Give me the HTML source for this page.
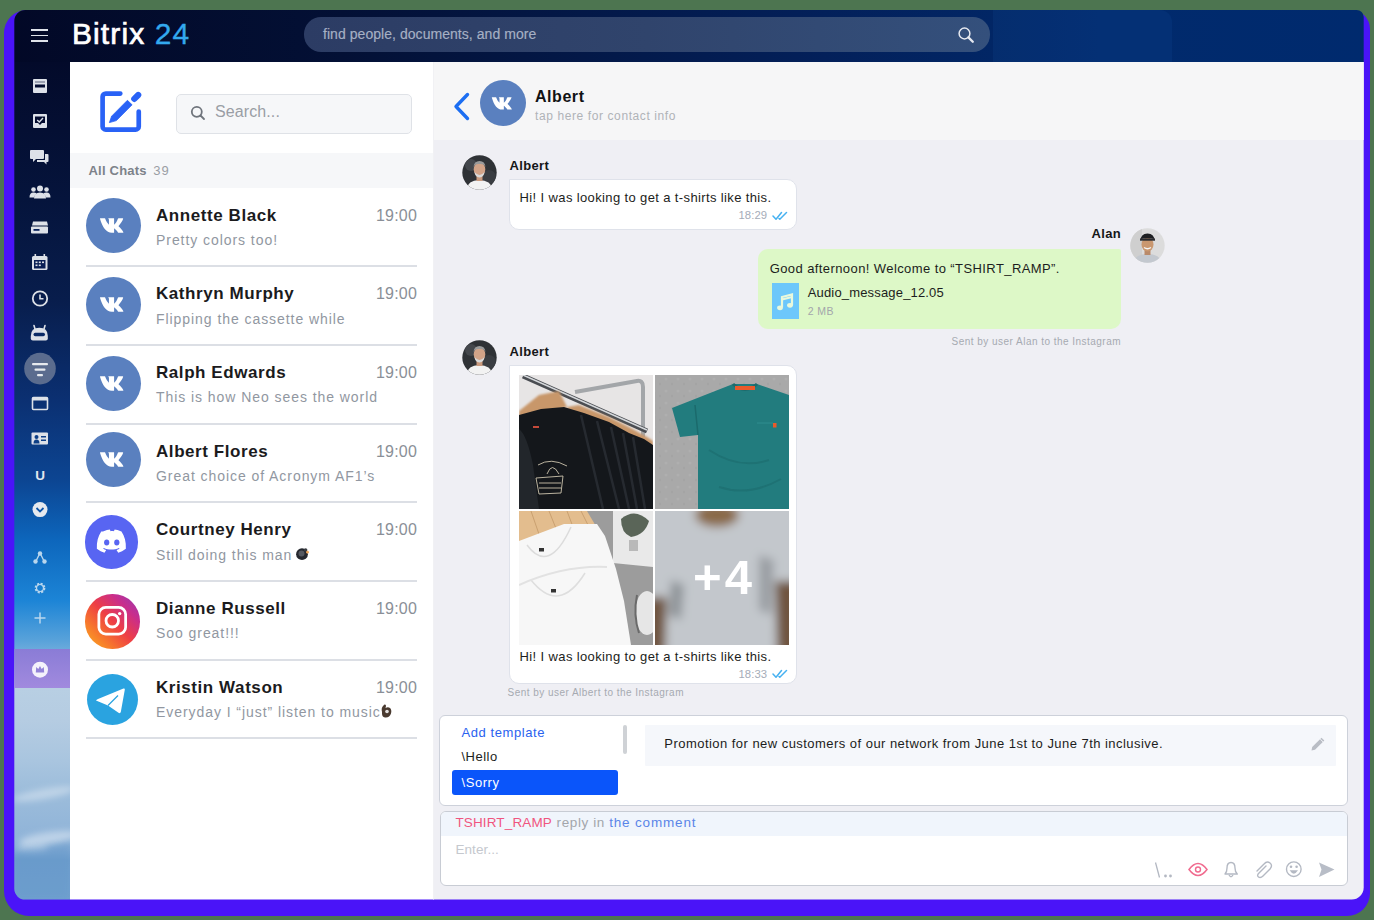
<!DOCTYPE html>
<html><head><meta charset="utf-8">
<style>
*{box-sizing:border-box;margin:0;padding:0}
html,body{width:1374px;height:920px;overflow:hidden}
body{background:#4d7550;position:relative;font-family:"Liberation Sans",sans-serif}
.a{position:absolute}
.t{position:absolute;white-space:nowrap;line-height:1}
#purple{left:3.5px;top:10px;width:1366.5px;height:906.3px;border-radius:23px 19px 23px 25px;background:#4a14f8}
#app{left:0;top:0;width:1374px;height:920px;clip-path:inset(10px 10.3px 20.4px 14.3px round 11px 7px 12px 11px)}
#hdr{left:0;top:0;width:1374px;height:62px;background:linear-gradient(90deg,#020826 0%,#031035 25%,#03205a 60%,#012a6c 80%,#002a6e 100%)}
#side{left:0;top:62px;width:70px;height:858px;background:linear-gradient(180deg,#030a2a 0%,#05143c 16%,#081d4c 27.7%,#0b3072 39.4%,#0c4592 48.7%,#0d66bc 55.7%,#1c84d6 62.7%,#58a2da 67.4%,#b8cfe3 73%,#b5cce2 76.7%,#a9c5df 81.4%,#9dbddb 84.8%,#8fb3d8 90.7%,#6f9fcd 93%,#73a3d0 97.7%)}
#list{left:70px;top:62px;width:364px;height:858px;background:#fff}
#chat{left:434px;top:62px;width:940px;height:858px;background:#efeff4}
#chdr{left:434px;top:62px;width:940px;height:78px;background:#f6f6f7}
.nm{position:absolute;white-space:nowrap;line-height:1;font-size:17px;font-weight:700;color:#1b1b1d;letter-spacing:0.57px;left:156px}
.ms{position:absolute;white-space:nowrap;line-height:1;font-size:14px;color:#9197a1;letter-spacing:0.94px;left:156px}
.tm{position:absolute;white-space:nowrap;line-height:1;font-size:16px;color:#8a8f97;letter-spacing:0.2px;right:957px}
.sep{position:absolute;left:86px;width:331px;height:2px;background:#dcdfe5}
.av{position:absolute;left:85.5px;width:55px;height:55px;border-radius:50%}
</style></head><body>
<div id="purple" class="a"></div>
<div id="app" class="a">
  <div id="hdr" class="a"></div>
  <div class="a" style="left:993px;top:10px;width:179px;height:52px;border-radius:0 12px 0 0;background:rgba(40,110,200,0.10)"></div>
  <div class="a" style="left:31px;top:29px;width:17px;height:1.6px;background:#dfe3ea"></div>
  <div class="a" style="left:31px;top:34.5px;width:17px;height:1.6px;background:#dfe3ea"></div>
  <div class="a" style="left:31px;top:40px;width:17px;height:1.6px;background:#dfe3ea"></div>
  <div class="t" style="left:72px;top:19px;font-size:30px;color:#fff;letter-spacing:1.1px;-webkit-text-stroke:0.7px #fff">Bitrix <span style="color:#33a9ee;-webkit-text-stroke:0.3px #33a9ee">24</span></div>
  <div class="a" style="left:304px;top:17.2px;width:686px;height:34.5px;border-radius:17.2px;background:linear-gradient(90deg,#2c3c64 0%,#30446c 50%,#34507c 100%)"></div>
  <div class="t" style="left:323px;top:27px;font-size:14px;color:#a6b0c4;letter-spacing:0.05px;-webkit-text-stroke:0.15px #a6b0c4">find people, documents, and more</div>
  <svg class="a" style="left:957px;top:26px" width="18" height="18" viewBox="0 0 18 18"><circle cx="7.5" cy="7.5" r="5.4" fill="none" stroke="#e6e9f0" stroke-width="1.5"/><path d="M11.4 11.4 L15.8 15.8" stroke="#e6e9f0" stroke-width="2.3" stroke-linecap="round"/></svg>
  <div id="side" class="a"></div>
  <svg class="a" style="left:14px;top:760px" width="56" height="140" viewBox="0 0 56 140"><defs><filter id="cb" x="-50%" y="-50%" width="200%" height="200%"><feGaussianBlur stdDeviation="3"/></filter></defs><g filter="url(#cb)" fill="#fff"><ellipse cx="30" cy="34" rx="32" ry="5" opacity=".35" transform="rotate(-10 30 34)"/><ellipse cx="35" cy="78" rx="30" ry="6" opacity=".4" transform="rotate(-8 35 78)"/><ellipse cx="18" cy="88" rx="16" ry="4" opacity=".3"/></g><path d="M0 94 Q20 86 35 88 Q48 82 56 84 V140 H0z" fill="#5f93c8" opacity=".3" filter="url(#cb)"/></svg>
  <div class="a" style="left:14px;top:649px;width:56px;height:39px;background:linear-gradient(180deg,#8a7cd6,#a18ade)"></div>
  <svg class="a" style="left:0;top:62px" width="70" height="640" viewBox="0 62 70 640">
    <g fill="#dde1e8">
      <rect x="33" y="79" width="14" height="14" rx="1"/>
      <rect x="33" y="114" width="14" height="14" rx="1"/>
    </g>
    <rect x="35" y="84.5" width="10" height="3" fill="#030b2e"/>
    <rect x="35" y="81.5" width="10" height="1" fill="#030b2e" opacity=".6"/>
    <path d="M35 116.5 H45 V123 H42 L40 125 L38 123 H35 Z" fill="#030b2e"/>
    <path d="M37.2 120 L39.3 122 L43 118" stroke="#dde1e8" stroke-width="1.4" fill="none"/>
    <g fill="#dde1e8">
      <path d="M31 150 h12 a1 1 0 0 1 1 1 v7 a1 1 0 0 1 -1 1 h-7 l-3 3 v-3 h-2 a1 1 0 0 1 -1 -1 v-7 a1 1 0 0 1 1 -1z"/>
      <path d="M45 154 h2.5 a1 1 0 0 1 1 1 v6 a1 1 0 0 1 -1 1 h-1 v2.5 l-2.5 -2.5 h-7 v-2 h8 z"/>
      <circle cx="40" cy="188.5" r="3"/><path d="M34 198.5 q0 -6 6 -6 q6 0 6 6z"/>
      <circle cx="33.5" cy="189.5" r="2.3"/><path d="M29.5 197.5 q0 -5 4 -5 q2 0 3 1 q-2 2 -2 4z"/>
      <circle cx="46.5" cy="189.5" r="2.3"/><path d="M50.5 197.5 q0 -5 -4 -5 q-2 0 -3 1 q2 2 2 4z"/>
      <path d="M33 221.5 h14 l1 4 h-16z"/>
      <rect x="31" y="226.5" width="17" height="7" rx="1"/>
      <rect x="32" y="256" width="15.5" height="14" rx="1.5"/>
      <rect x="34.5" y="254" width="1.6" height="4"/><rect x="43.5" y="254" width="1.6" height="4"/>
    </g>
    <rect x="33.5" y="229" width="6" height="1.8" fill="#07205a"/>
    <g fill="#0a1f55"><rect x="34" y="260" width="11.5" height="8.5"/></g>
    <g fill="#dde1e8"><rect x="35.5" y="261.5" width="2" height="1.6"/><rect x="38.8" y="261.5" width="2" height="1.6"/><rect x="42" y="261.5" width="2" height="1.6"/><rect x="35.5" y="264.5" width="2" height="1.6"/><rect x="38.8" y="264.5" width="2" height="1.6"/></g>
    <circle cx="40" cy="298.5" r="7.2" fill="none" stroke="#dde1e8" stroke-width="1.8"/>
    <path d="M40 294.5 V298.8 H43.5" stroke="#dde1e8" stroke-width="1.6" fill="none"/>
    <path d="M30.8 336 Q30.8 327.8 39.3 327.8 Q47.8 327.8 47.8 336 V338.4 a2 2 0 0 1 -2 2 H32.8 a2 2 0 0 1 -2 -2z" fill="#dde1e8"/><path d="M34 325.5 L35 329 M45 325.5 L44 329" stroke="#dde1e8" stroke-width="1.6" stroke-linecap="round"/><rect x="33.5" y="332.8" width="11.5" height="3.4" rx="1.7" fill="#0b2a66"/>
    <circle cx="40" cy="368.6" r="15.8" fill="#5b6c8e"/>
    <g fill="#e6e9ee"><rect x="32" y="363" width="16" height="2.2" rx="1"/><rect x="34.5" y="368.5" width="11" height="2.2" rx="1"/><rect x="37" y="374" width="6" height="2.2" rx="1"/></g>
    <rect x="32.5" y="397.5" width="15" height="12" rx="1" fill="none" stroke="#dde1e8" stroke-width="1.6"/>
    <rect x="32.5" y="397.5" width="15" height="3" fill="#dde1e8"/>
    <rect x="31.5" y="432.5" width="16.5" height="12" rx="1" fill="#dde1e8"/>
    <g fill="#0d3e86"><circle cx="36.5" cy="437" r="2"/><path d="M33.5 443.5 q0 -4 3 -4 q3 0 3 4z"/><rect x="41" y="436" width="5" height="1.5"/><rect x="41" y="439.5" width="5" height="1.5"/></g>
    <text x="40" y="479.5" text-anchor="middle" font-family="Liberation Sans" font-weight="700" font-size="13.5" fill="#e3e7ee">U</text>
    <circle cx="40" cy="509.6" r="7.5" fill="#e6e9ee"/>
    <path d="M36.5 508 L40 511.5 L43.5 508" stroke="#0f55a8" stroke-width="1.8" fill="none"/>
    <g stroke="#b9d6ee" stroke-width="1.4" fill="none"><path d="M40 553 L36 561 M40 553 L44 561"/></g>
    <g fill="#b9d6ee"><circle cx="40" cy="553.5" r="2.2"/><circle cx="35.5" cy="561.5" r="2.2"/><circle cx="44.5" cy="561.5" r="2.2"/></g>
    <circle cx="40" cy="588" r="4.2" fill="none" stroke="#b9d6ee" stroke-width="2.4" stroke-dasharray="2 1.3"/>
    <circle cx="40" cy="588" r="3.5" fill="none" stroke="#b9d6ee" stroke-width="1.2"/>
    <path d="M40 612.5 V623.5 M34.5 618 H45.5" stroke="#b9d6ee" stroke-width="1.5"/>
    <circle cx="40" cy="669.7" r="8" fill="#f4f2fb"/>
    <path d="M35.8 672.5 L36.2 667 L38.3 669 L40 666 L41.7 669 L43.8 667 L44.2 672.5z" fill="#9383d8"/>
  </svg>
  <div id="list" class="a"></div>
<svg class="a" style="left:99px;top:90px" width="44" height="44" viewBox="0 0 44 44"><path d="M21.3 3.55 H6.8 a3.2 3.2 0 0 0 -3.2 3.2 V36.45 a3.2 3.2 0 0 0 3.2 3.2 H36.55 a3.2 3.2 0 0 0 3.2 -3.2 V21.6" fill="none" stroke="#2962f6" stroke-width="4.7" stroke-linecap="round" stroke-linejoin="round"/><path d="M10.4 32.6 L12.6 26.2 L28.4 10.3 L33.1 14.8 L17.4 30.6 Z" fill="#2962f6" stroke="#2962f6" stroke-width="0.8" stroke-linejoin="round"/><path d="M35.3 8.9 L39.2 5" stroke="#2962f6" stroke-width="6.2" stroke-linecap="round"/></svg>
  <div class="a" style="left:176px;top:93.5px;width:236px;height:40.5px;border:1.3px solid #dfe2e7;border-radius:5px;background:#f6f7f9"></div>
  <svg class="a" style="left:190px;top:105px" width="16" height="16" viewBox="0 0 16 16"><circle cx="6.8" cy="6.8" r="5" fill="none" stroke="#6f747c" stroke-width="1.8"/><path d="M10.5 10.5 L14 14" stroke="#6f747c" stroke-width="1.8" stroke-linecap="round"/></svg>
  <div class="t" style="left:215px;top:104px;font-size:16px;color:#9a9ea5;letter-spacing:0.1px">Search...</div>
  <div class="a" style="left:70px;top:153px;width:364px;height:34.5px;background:#f6f7f9"></div>
  <div class="t" style="left:88.5px;top:163.5px;font-size:13px;font-weight:700;color:#7d828a;letter-spacing:0.22px">All Chats <span style="font-weight:400;color:#9a9ea4;margin-left:2.5px;letter-spacing:1px">39</span></div>
  <div class="av" style="left:85.5px;top:198.0px;width:55px;height:55px;background:#5a80bf"><svg width="100%" height="100%" viewBox="0 0 55 55"><path transform="translate(2.2 2.35) scale(0.83)" d="M14.5 21.5 h5.2 c0.3 0 0.6 0.2 0.7 0.5 c1.2 3.4 3 6.2 4.6 7.3 v-5.6 c0-0.8-0.4-1.5-1-2 c-0.2-0.1 0-0.2 0.1-0.2 h6.6 c0.3 0 0.5 0.2 0.5 0.5 v7.3 c1.6-0.9 3.4-3.6 4.6-7.1 c0.1-0.4 0.4-0.7 0.8-0.7 h5 c0.4 0 0.6 0.3 0.5 0.6 c-0.9 3.1-3.5 6.5-5.3 8.4 c-0.3 0.3-0.3 0.7 0 1 c2.1 2 4.6 4.7 5.6 7 c0.1 0.3-0.1 0.6-0.4 0.6 h-5.2 c-0.4 0-0.7-0.2-0.9-0.5 c-1.1-1.8-2.8-3.7-4.7-5 v5 c0 0.3-0.2 0.5-0.5 0.5 h-2.3 c-6.4 0-11.3-6.6-14.2-16.9 c-0.1-0.3 0.1-0.6 0.4-0.6z" fill="#fff"/></svg></div>
  <div class="nm" style="top:206.5px">Annette Black</div>
  <div class="tm" style="top:207.5px">19:00</div>
  <div class="ms" style="top:233.0px">Pretty colors too!</div>
  <div class="sep" style="top:265.4px"></div>
  <div class="av" style="left:85.5px;top:277.2px;width:55px;height:55px;background:#5a80bf"><svg width="100%" height="100%" viewBox="0 0 55 55"><path transform="translate(2.2 2.35) scale(0.83)" d="M14.5 21.5 h5.2 c0.3 0 0.6 0.2 0.7 0.5 c1.2 3.4 3 6.2 4.6 7.3 v-5.6 c0-0.8-0.4-1.5-1-2 c-0.2-0.1 0-0.2 0.1-0.2 h6.6 c0.3 0 0.5 0.2 0.5 0.5 v7.3 c1.6-0.9 3.4-3.6 4.6-7.1 c0.1-0.4 0.4-0.7 0.8-0.7 h5 c0.4 0 0.6 0.3 0.5 0.6 c-0.9 3.1-3.5 6.5-5.3 8.4 c-0.3 0.3-0.3 0.7 0 1 c2.1 2 4.6 4.7 5.6 7 c0.1 0.3-0.1 0.6-0.4 0.6 h-5.2 c-0.4 0-0.7-0.2-0.9-0.5 c-1.1-1.8-2.8-3.7-4.7-5 v5 c0 0.3-0.2 0.5-0.5 0.5 h-2.3 c-6.4 0-11.3-6.6-14.2-16.9 c-0.1-0.3 0.1-0.6 0.4-0.6z" fill="#fff"/></svg></div>
  <div class="nm" style="top:285.2px">Kathryn Murphy</div>
  <div class="tm" style="top:286.2px">19:00</div>
  <div class="ms" style="top:311.7px">Flipping the cassette while</div>
  <div class="sep" style="top:344.1px"></div>
  <div class="av" style="left:85.5px;top:355.5px;width:55px;height:55px;background:#5a80bf"><svg width="100%" height="100%" viewBox="0 0 55 55"><path transform="translate(2.2 2.35) scale(0.83)" d="M14.5 21.5 h5.2 c0.3 0 0.6 0.2 0.7 0.5 c1.2 3.4 3 6.2 4.6 7.3 v-5.6 c0-0.8-0.4-1.5-1-2 c-0.2-0.1 0-0.2 0.1-0.2 h6.6 c0.3 0 0.5 0.2 0.5 0.5 v7.3 c1.6-0.9 3.4-3.6 4.6-7.1 c0.1-0.4 0.4-0.7 0.8-0.7 h5 c0.4 0 0.6 0.3 0.5 0.6 c-0.9 3.1-3.5 6.5-5.3 8.4 c-0.3 0.3-0.3 0.7 0 1 c2.1 2 4.6 4.7 5.6 7 c0.1 0.3-0.1 0.6-0.4 0.6 h-5.2 c-0.4 0-0.7-0.2-0.9-0.5 c-1.1-1.8-2.8-3.7-4.7-5 v5 c0 0.3-0.2 0.5-0.5 0.5 h-2.3 c-6.4 0-11.3-6.6-14.2-16.9 c-0.1-0.3 0.1-0.6 0.4-0.6z" fill="#fff"/></svg></div>
  <div class="nm" style="top:363.8px">Ralph Edwards</div>
  <div class="tm" style="top:364.8px">19:00</div>
  <div class="ms" style="top:390.3px">This is how Neo sees the world</div>
  <div class="sep" style="top:422.7px"></div>
  <div class="av" style="left:85.5px;top:431.5px;width:55px;height:55px;background:#5a80bf"><svg width="100%" height="100%" viewBox="0 0 55 55"><path transform="translate(2.2 2.35) scale(0.83)" d="M14.5 21.5 h5.2 c0.3 0 0.6 0.2 0.7 0.5 c1.2 3.4 3 6.2 4.6 7.3 v-5.6 c0-0.8-0.4-1.5-1-2 c-0.2-0.1 0-0.2 0.1-0.2 h6.6 c0.3 0 0.5 0.2 0.5 0.5 v7.3 c1.6-0.9 3.4-3.6 4.6-7.1 c0.1-0.4 0.4-0.7 0.8-0.7 h5 c0.4 0 0.6 0.3 0.5 0.6 c-0.9 3.1-3.5 6.5-5.3 8.4 c-0.3 0.3-0.3 0.7 0 1 c2.1 2 4.6 4.7 5.6 7 c0.1 0.3-0.1 0.6-0.4 0.6 h-5.2 c-0.4 0-0.7-0.2-0.9-0.5 c-1.1-1.8-2.8-3.7-4.7-5 v5 c0 0.3-0.2 0.5-0.5 0.5 h-2.3 c-6.4 0-11.3-6.6-14.2-16.9 c-0.1-0.3 0.1-0.6 0.4-0.6z" fill="#fff"/></svg></div>
  <div class="nm" style="top:442.5px">Albert Flores</div>
  <div class="tm" style="top:443.5px">19:00</div>
  <div class="ms" style="top:469.0px">Great choice of Acronym AF1’s</div>
  <div class="sep" style="top:501.4px"></div>
  <div class="av" style="left:84.8px;top:515.4px;width:53.5px;height:53.5px;background:#5865f2"><svg width="100%" height="100%" viewBox="0 0 55 55"><path d="M18.5 17 c2.8-1.3 5.6-2 7-2.1 l0.8 1.7 c1-0.1 2.4-0.1 3.4 0 l0.8-1.7 c1.4 0.1 4.2 0.8 7 2.1 c3.2 4.8 4.9 10.5 4.5 17.8 c-2.5 2-5.3 3.3-7.8 4 l-1.8-2.8 c1.2-0.4 2.2-0.9 3.2-1.6 l-0.8-0.6 c-4.4 2.1-11 2.1-15.4 0 l-0.8 0.6 c1 0.7 2 1.2 3.2 1.6 l-1.8 2.8 c-2.5-0.7-5.3-2-7.8-4 c-0.4-7.3 1.3-13 4.5-17.8z" fill="#fff"/><ellipse cx="22.3" cy="28.3" rx="2.7" ry="3" fill="#5865f2"/><ellipse cx="32.7" cy="28.3" rx="2.7" ry="3" fill="#5865f2"/></svg></div>
  <div class="nm" style="top:521.2px">Courtney Henry</div>
  <div class="tm" style="top:522.2px">19:00</div>
  <div class="ms" style="top:547.7px">Still doing this man</div>
  <div class="sep" style="top:580.1px"></div>
  <div class="av" style="left:85.0px;top:594.0px;width:54.5px;height:54.5px;background:linear-gradient(45deg,#fbb11f 0%,#f77a2c 25%,#ee3f44 50%,#c92d8c 75%,#8d3bb8 100%)"><svg width="100%" height="100%" viewBox="0 0 55 55"><rect x="14" y="13.5" width="27" height="27" rx="7" fill="none" stroke="#fff" stroke-width="2.8"/><circle cx="27.5" cy="27" r="6.3" fill="none" stroke="#fff" stroke-width="2.8"/><circle cx="35" cy="19.8" r="1.7" fill="#fff"/></svg></div>
  <div class="nm" style="top:599.9px">Dianne Russell</div>
  <div class="tm" style="top:600.9px">19:00</div>
  <div class="ms" style="top:626.4px">Soo great!!!</div>
  <div class="sep" style="top:658.8px"></div>
  <div class="av" style="left:86.5px;top:673.5px;width:51.5px;height:51.5px;background:#2aa3e0"><svg width="100%" height="100%" viewBox="0 0 51.5 51.5"><path d="M9 26.5 Q9.5 25.5 11 25 L36.5 14.5 Q38 14 37.8 15.8 L33.8 38 Q33.3 39.8 31.5 38.8 L21 31.5 Z" fill="#fff"/><path d="M21 31.5 L31 21.5" stroke="#2aa3e0" stroke-width="1.2"/></svg></div>
  <div class="nm" style="top:678.5px">Kristin Watson</div>
  <div class="tm" style="top:679.5px">19:00</div>
  <div class="ms" style="top:705.0px">Everyday I “just” listen to music</div>
  <div class="sep" style="top:737.4px"></div>
  <svg class="a" style="left:295px;top:545px" width="16" height="16" viewBox="0 0 16 16"><circle cx="7" cy="9.2" r="5.9" fill="#25282e"/><circle cx="6.5" cy="8.5" r="3" fill="#6a6e76" opacity=".7"/><circle cx="10.6" cy="5" r="1.8" fill="#3a3d42"/><circle cx="12.5" cy="7.2" r="1.4" fill="#f3a95a"/></svg>
  <svg class="a" style="left:379px;top:703px" width="14" height="16" viewBox="0 0 14 16"><path d="M3 9 Q2 5 4 3 L5.5 1.5 Q7 1 7 3 L6.5 5 Q9 3.5 11 5 Q13 7 12 10.5 Q10.5 15 6 14.5 Q2.5 14 3 9z" fill="#4a3a30"/><circle cx="8" cy="8.5" r="1.8" fill="#fff" opacity=".85"/></svg>
  <div id="chat" class="a"></div>
  <div id="chdr" class="a"></div>
  <div class="a" style="left:433px;top:62px;width:1px;height:858px;background:#f1f1f4"></div>
  <svg class="a" style="left:450px;top:90px" width="24" height="34" viewBox="0 0 24 34"><path d="M17.5 4.5 L6 16.5 L17.5 28.5" fill="none" stroke="#1c6ef2" stroke-width="3.4" stroke-linecap="round" stroke-linejoin="round"/></svg>
  <div class="av" style="left:479.7px;top:79.5px;width:46.7px;height:46.7px;background:#5a80bf"><svg width="100%" height="100%" viewBox="0 0 55 55"><path transform="translate(2.2 2.35) scale(0.83)" d="M14.5 21.5 h5.2 c0.3 0 0.6 0.2 0.7 0.5 c1.2 3.4 3 6.2 4.6 7.3 v-5.6 c0-0.8-0.4-1.5-1-2 c-0.2-0.1 0-0.2 0.1-0.2 h6.6 c0.3 0 0.5 0.2 0.5 0.5 v7.3 c1.6-0.9 3.4-3.6 4.6-7.1 c0.1-0.4 0.4-0.7 0.8-0.7 h5 c0.4 0 0.6 0.3 0.5 0.6 c-0.9 3.1-3.5 6.5-5.3 8.4 c-0.3 0.3-0.3 0.7 0 1 c2.1 2 4.6 4.7 5.6 7 c0.1 0.3-0.1 0.6-0.4 0.6 h-5.2 c-0.4 0-0.7-0.2-0.9-0.5 c-1.1-1.8-2.8-3.7-4.7-5 v5 c0 0.3-0.2 0.5-0.5 0.5 h-2.3 c-6.4 0-11.3-6.6-14.2-16.9 c-0.1-0.3 0.1-0.6 0.4-0.6z" fill="#fff"/></svg></div>
  <div class="t" style="left:535.0px;top:88.76px;font-size:16px;font-weight:700;color:#111214;letter-spacing:0.55px;">Albert</div>
  <div class="t" style="left:535.0px;top:110.34px;font-size:12px;font-weight:400;color:#b0b3b8;letter-spacing:0.6px;">tap here for contact info</div>
  <svg class="a" style="left:461.5px;top:154.8px" width="35" height="35" viewBox="0 0 35 35"><defs><clipPath id="ca172"><circle cx="17.5" cy="17.5" r="17.2"/></clipPath></defs><g clip-path="url(#ca172)"><rect width="35" height="35" fill="#2f3236"/><circle cx="9" cy="10" r="6" fill="#44474c"/><circle cx="27" cy="22" r="7" fill="#3a3d42"/><path d="M4 35 Q6 25 17 25 Q29 25 31 35z" fill="#f2f2f2"/><rect x="14.5" y="20" width="6" height="6" fill="#c99a7e"/><ellipse cx="17.5" cy="14.5" rx="5.8" ry="7" fill="#d2a388"/><path d="M11.5 12 Q12 6 17.5 6 Q23 6 23.5 12 Q22 8.5 17.5 9 Q13 8.5 11.5 12z" fill="#9a9a9a"/><path d="M12.5 17 Q13 22 17.5 22.5 Q22 22 22.5 17 Q20 20 17.5 20 Q15 20 12.5 17z" fill="#d9d9d9"/></g></svg>
  <div class="t" style="left:509.6px;top:158.80px;font-size:13px;font-weight:700;color:#151618;letter-spacing:0.33px;">Albert</div>
  <div class="a" style="left:508.8px;top:178.5px;width:288.7px;height:51px;background:#fff;border:1px solid #dfe2ea;border-radius:0 10px 10px 10px"></div>
  <div class="t" style="left:519.6px;top:191.00px;font-size:13px;font-weight:400;color:#1c1d20;letter-spacing:0.37px;">Hi! I was looking to get a t-shirts like this.</div>
  <div class="t" style="left:738.4px;top:209.63px;font-size:11.3px;font-weight:400;color:#a5acb8;letter-spacing:0.1px;">18:29</div>
  <svg class="a" style="left:772px;top:210.5px" width="16" height="10" viewBox="0 0 16 10"><path d="M1 5 L4 8.2 L9.5 1.5 M7 7.5 L7.8 8.2 L14.5 1.5" fill="none" stroke="#46b1f1" stroke-width="1.5" stroke-linecap="round" stroke-linejoin="round"/></svg>
  <div class="t" style="right:253.0px;top:227.00px;font-size:13px;font-weight:700;color:#151618;letter-spacing:0.33px;">Alan</div>
  <svg class="a" style="left:1130px;top:228px" width="35" height="35" viewBox="0 0 35 35"><defs><clipPath id="cal"><circle cx="17.5" cy="17.5" r="17.2"/></clipPath></defs><g clip-path="url(#cal)"><rect width="35" height="35" fill="#dcdcdc"/><rect width="12" height="35" fill="#cfcfcf"/><path d="M3 35 Q5 26 17.5 26 Q30 26 32 35z" fill="#c3c8cf"/><rect x="14.5" y="21" width="6" height="6" fill="#b98a6a"/><ellipse cx="17.5" cy="16.5" rx="6" ry="7" fill="#c9976f"/><path d="M10.5 13 Q10.5 5.5 17.5 5.5 Q24.5 5.5 24.5 13 L24.5 11 Q17.5 9.5 10.5 11z" fill="#1e1f22"/><rect x="10" y="10.5" width="15" height="2.2" fill="#2a2b2e"/><path d="M14 19.5 Q17.5 22 21 19.5" stroke="#f4f4f4" stroke-width="1.3" fill="none"/></g></svg>
  <div class="a" style="left:757.6px;top:249px;width:363.5px;height:79.6px;background:#ddf8c7;border-radius:10px 2px 10px 10px"></div>
  <div class="t" style="left:769.7px;top:261.60px;font-size:13px;font-weight:400;color:#1c1d20;letter-spacing:0.41px;">Good afternoon! Welcome to “TSHIRT_RAMP”.</div>
  <svg class="a" style="left:771.5px;top:283px" width="27.5" height="36" viewBox="0 0 27.5 36"><rect width="27.5" height="36" fill="#6dc7fb"/><path d="M10 24.5 V14 L20 11.5 V22" fill="none" stroke="#e9f8dc" stroke-width="2.2"/><ellipse cx="8" cy="24.8" rx="2.9" ry="2.4" fill="#e9f8dc"/><ellipse cx="18" cy="22.3" rx="2.9" ry="2.4" fill="#e9f8dc"/><path d="M10 16.5 L20 14" stroke="#e9f8dc" stroke-width="2.2"/></svg>
  <div class="t" style="left:807.7px;top:286.00px;font-size:13px;font-weight:400;color:#1c1d20;letter-spacing:0.17px;">Audio_message_12.05</div>
  <div class="t" style="left:807.7px;top:305.91px;font-size:10.5px;font-weight:400;color:#a3a6ab;letter-spacing:0.4px;">2 MB</div>
  <div class="t" style="right:253.0px;top:336.74px;font-size:10px;font-weight:400;color:#a6aab1;letter-spacing:0.47px;">Sent by user Alan to the Instagram</div>
  <svg class="a" style="left:461.5px;top:340.2px" width="35" height="35" viewBox="0 0 35 35"><defs><clipPath id="ca357"><circle cx="17.5" cy="17.5" r="17.2"/></clipPath></defs><g clip-path="url(#ca357)"><rect width="35" height="35" fill="#2f3236"/><circle cx="9" cy="10" r="6" fill="#44474c"/><circle cx="27" cy="22" r="7" fill="#3a3d42"/><path d="M4 35 Q6 25 17 25 Q29 25 31 35z" fill="#f2f2f2"/><rect x="14.5" y="20" width="6" height="6" fill="#c99a7e"/><ellipse cx="17.5" cy="14.5" rx="5.8" ry="7" fill="#d2a388"/><path d="M11.5 12 Q12 6 17.5 6 Q23 6 23.5 12 Q22 8.5 17.5 9 Q13 8.5 11.5 12z" fill="#9a9a9a"/><path d="M12.5 17 Q13 22 17.5 22.5 Q22 22 22.5 17 Q20 20 17.5 20 Q15 20 12.5 17z" fill="#d9d9d9"/></g></svg>
  <div class="t" style="left:509.6px;top:345.00px;font-size:13px;font-weight:700;color:#151618;letter-spacing:0.33px;">Albert</div>
  <div class="a" style="left:508.8px;top:365.2px;width:288.2px;height:318.5px;background:#fff;border:1px solid #dfe2ea;border-radius:0 10px 10px 10px"></div>
  <svg class="a" style="left:519px;top:374.5px" width="270" height="270" viewBox="0 0 270 270">
    <defs>
      <clipPath id="t1"><rect x="0" y="0" width="134" height="134"/></clipPath>
      <clipPath id="t2"><rect x="136" y="0" width="134" height="134"/></clipPath>
      <clipPath id="t3"><rect x="0" y="136" width="134" height="134"/></clipPath>
      <clipPath id="t4"><rect x="136" y="136" width="134" height="134"/></clipPath>
      <filter id="bl" x="-20%" y="-20%" width="140%" height="140%"><feGaussianBlur stdDeviation="5"/></filter>
      <filter id="bl2"><feGaussianBlur stdDeviation="0.8"/></filter>
      <pattern id="cn" width="12" height="12" patternUnits="userSpaceOnUse"><rect width="12" height="12" fill="#a9a9a9"/><circle cx="3" cy="4" r="1.5" fill="#bdbdbd"/><circle cx="9" cy="9" r="1.2" fill="#979797"/></pattern>
    </defs>
    <g clip-path="url(#t1)">
      <rect width="134" height="134" fill="#e7e5e5"/>
      <path d="M56 17 L118 6 Q124 5 124 12 L124 62" fill="none" stroke="#a3a6a9" stroke-width="4"/>
      <path d="M4 1 L128 56" stroke="#4a4d52" stroke-width="5"/>
      <path d="M4 0 L128 55" stroke="#d5d8db" stroke-width="1.5"/>
      <g filter="url(#bl2)">
      <path d="M0 36 L20 20 L40 16 L48 32 L20 40 L0 48z" fill="#c8976a"/>
      <path d="M48 32 L60 30 L90 42 L110 52 L128 62 L134 66 L134 72 L110 64 L80 52 L50 40z" fill="#c8976a"/>
      </g>
      <path d="M0 40 L22 34 L45 32 L65 38 L90 47 L110 58 L125 64 L134 70 V134 H0z" fill="#14171b"/>
      <path d="M62 40 L84 134 M78 46 L100 134 M92 52 L110 134 M104 58 L118 134 M114 62 L126 134" stroke="#262a30" stroke-width="2.5"/>
      <path d="M0 54 Q8 60 14 90 L20 134 H0z" fill="#22262b"/>
      <rect x="14" y="51" width="6" height="2" fill="#c54a3a"/>
      <g fill="none" stroke="#cdc4ae" stroke-width="0.9"><path d="M19 90 Q32 82 48 91"/><path d="M17 103 L44 101 L42 118 L20 119z"/><path d="M28 99 Q33 86 40 99"/><path d="M20 108 H42 M20 113 H42"/></g>
    </g>
    <g clip-path="url(#t1)"></g>
    <g clip-path="url(#t2)">
      <rect x="136" width="134" height="134" fill="#a9a9a9"/>
      <rect x="136" width="134" height="134" fill="url(#cn)" opacity=".3"/>
      <path d="M153 33 L186 20 L214 9 L238 9 L270 20 V134 H179 L179 60 L161 62z" fill="#227c7e"/>
      <path d="M214 9 Q226 20 238 9" stroke="#1d6b6d" stroke-width="3" fill="none"/>
      <path d="M216 11 L236 11 L236 15 L216 15z" fill="#ea5a2a"/>
      <rect x="254" y="48" width="3.5" height="4.5" fill="#ea5a2a"/>
      <path d="M238 48 H254" stroke="#2e8d8f" stroke-width="1"/>
      <path d="M176 30 L179 60" stroke="#1b6a6c" stroke-width="1.5"/>
      <path d="M190 75 Q220 95 250 85 M200 112 Q230 122 262 104" stroke="#1e7274" stroke-width="2" fill="none"/>
    </g>
    <g clip-path="url(#t3)">
      <rect y="136" width="134" height="134" fill="#9c9c9c"/>
      <path d="M0 136 H68 L88 170 L0 166z" fill="#e3bd8e"/>
      <path d="M12 136 L22 165 M30 136 L42 166 M48 136 L60 168 M62 136 L74 160" stroke="#c9a070" stroke-width="1"/>
      <path d="M94 136 H134 V192 L94 188z" fill="#e9e9e9"/>
      <path d="M102 144 Q116 132 130 146 Q126 160 112 162 Q102 158 102 144z" fill="#5a6558"/>
      <rect x="110" y="165" width="9" height="11" fill="#b9b9b9"/>
      <path d="M0 166 L45 149 L78 149 L86 161 L97 194 L105 226 L112 270 H0z" fill="#f7f7f7"/>
      <path d="M8 170 Q30 200 52 152" fill="none" stroke="#dcdcdc" stroke-width="1.5"/>
      <path d="M12 205 Q40 240 66 198" fill="none" stroke="#dedede" stroke-width="1.5"/>
      <path d="M0 210 Q45 190 88 192" fill="none" stroke="#e2e2e2" stroke-width="2"/>
      <rect x="20" y="173" width="5" height="3.5" fill="#333"/>
      <rect x="32" y="214" width="5" height="3.5" fill="#333"/>
      <ellipse cx="128" cy="238" rx="12" ry="22" fill="#e6e6e6"/>
      <path d="M118 220 Q114 240 120 258" stroke="#6a6a6a" stroke-width="2" fill="none"/>
    </g>
    <g clip-path="url(#t4)">
      <g filter="url(#bl)">
        <rect x="126" y="126" width="154" height="154" fill="#c3c7cc"/>
        <ellipse cx="198" cy="140" rx="22" ry="12" fill="#8a6a4a"/>
        <path d="M126 222 L148 222 L146 280 H126z" fill="#6f5440"/>
        <path d="M280 206 L256 206 L258 280 H280z" fill="#6f5440"/>
        <path d="M152 205 L165 210 L162 245 L150 240z" fill="#8f9499"/>
        <path d="M240 180 L255 185 L252 240 L240 235z" fill="#9a9ea3"/>
      </g>
      <text x="205" y="219" text-anchor="middle" font-family="Liberation Sans" font-weight="700" font-size="49" fill="#fff" letter-spacing="3">+4</text>
    </g>
  </svg>
  <div class="t" style="left:519.6px;top:650.00px;font-size:13px;font-weight:400;color:#1c1d20;letter-spacing:0.37px;">Hi! I was looking to get a t-shirts like this.</div>
  <div class="t" style="left:738.4px;top:668.63px;font-size:11.3px;font-weight:400;color:#a5acb8;letter-spacing:0.1px;">18:33</div>
  <svg class="a" style="left:772px;top:669px" width="16" height="10" viewBox="0 0 16 10"><path d="M1 5 L4 8.2 L9.5 1.5 M7 7.5 L7.8 8.2 L14.5 1.5" fill="none" stroke="#46b1f1" stroke-width="1.5" stroke-linecap="round" stroke-linejoin="round"/></svg>
  <div class="t" style="left:507.5px;top:687.53px;font-size:10px;font-weight:400;color:#a6aab1;letter-spacing:0.47px;">Sent by user Albert to the Instagram</div>
  <div class="a" style="left:438.5px;top:715.4px;width:909.2px;height:90.6px;background:#fff;border:1px solid #cdd1da;border-radius:6px"></div>
  <div class="a" style="left:452.4px;top:770px;width:165.5px;height:24.8px;background:#0a55fa;border-radius:3px"></div>
  <div class="a" style="left:622.7px;top:724.9px;width:4.4px;height:29px;background:#cfd2d6;border-radius:2px"></div>
  <div class="a" style="left:644.8px;top:725px;width:691.6px;height:40.7px;background:#f5f7fb;border-radius:1px"></div>
  <svg class="a" style="left:1309px;top:735px" width="18" height="18" viewBox="0 0 18 18"><path d="M2.5 15.5 L3.2 12 L12.5 2.7 L15.3 5.5 L6 14.8z" fill="#b9bdc5"/><path d="M11.2 4 L14 6.8" stroke="#f5f7fb" stroke-width="1"/></svg>
  <div class="t" style="left:461.5px;top:726.10px;font-size:13px;font-weight:400;color:#2a62ef;letter-spacing:0.58px;">Add template</div>
  <div class="t" style="left:461.5px;top:750.30px;font-size:13px;font-weight:400;color:#1c1d20;letter-spacing:0.5px;">\Hello</div>
  <div class="t" style="left:461.5px;top:775.60px;font-size:13px;font-weight:400;color:#ffffff;letter-spacing:0.55px;">\Sorry</div>
  <div class="t" style="left:664.3px;top:737.00px;font-size:13px;font-weight:400;color:#1c1d20;letter-spacing:0.46px;">Promotion for new customers of our network from June 1st to June 7th inclusive.</div>
  <div class="a" style="left:439.6px;top:811.2px;width:908.1px;height:75.2px;background:#fff;border:1px solid #c8ccd4;border-radius:6px;overflow:hidden"><div style="position:absolute;left:0;top:0;width:100%;height:23.4px;background:#f0f5fc"></div></div>
  <div class="t" style="left:455.4px;top:815.97px;font-size:13.5px;font-weight:400;color:#f0557f;letter-spacing:0.14px;">TSHIRT_RAMP</div>
  <div class="t" style="left:556.6px;top:815.97px;font-size:13.5px;font-weight:400;color:#a3a6ab;letter-spacing:0.6px;">reply in</div>
  <div class="t" style="left:609.2px;top:815.97px;font-size:13.5px;font-weight:400;color:#5a85e8;letter-spacing:0.83px;">the comment</div>
  <div class="t" style="left:455.4px;top:843.37px;font-size:13.5px;font-weight:400;color:#c5c8ce;letter-spacing:0.1px;">Enter...</div>
  <svg class="a" style="left:1150px;top:858px" width="190" height="24" viewBox="1150 858 190 24">
    <path d="M1155.5 862.5 L1159.5 877.5" stroke="#b3b8c2" stroke-width="1.3"/>
    <circle cx="1165.5" cy="876" r="1.4" fill="#b3b8c2"/><circle cx="1170.5" cy="876" r="1.4" fill="#b3b8c2"/>
    <path d="M1189 869.5 Q1198 857.5 1207 869.5 Q1198 881.5 1189 869.5z" fill="none" stroke="#f06b8f" stroke-width="1.5"/>
    <circle cx="1198" cy="869.5" r="2.5" fill="none" stroke="#f06b8f" stroke-width="1.4"/>
    <path d="M1225 874 Q1227 872 1227 868 Q1227 862.5 1231 862.5 Q1235 862.5 1235 868 Q1235 872 1237.3 874z" fill="none" stroke="#b4b9c3" stroke-width="1.4" stroke-linejoin="round"/>
    <path d="M1229 875 Q1231 878.5 1233 875" fill="none" stroke="#b4b9c3" stroke-width="1.4"/>
    <path d="M1266 866 L1259 873 Q1256.5 875.5 1258.5 877 Q1260.5 878.5 1263 876 L1270 869 Q1273 865.5 1270 863 Q1267 860.5 1264 864 L1257 871" fill="none" stroke="#b4b9c3" stroke-width="1.4" stroke-linecap="round"/>
    <circle cx="1293.8" cy="869.2" r="7.3" fill="none" stroke="#b4b9c3" stroke-width="1.4"/>
    <circle cx="1291" cy="866.8" r="1.3" fill="#b4b9c3"/><circle cx="1296.6" cy="866.8" r="1.3" fill="#b4b9c3"/>
    <path d="M1289.6 870.3 Q1293.8 877 1298 870.3z" fill="#b4b9c3"/>
    <path d="M1319 862.5 L1334.5 869.5 L1319 877 L1321.5 869.5z" fill="#b8bdc7"/>
  </svg>
</div>
</body></html>
